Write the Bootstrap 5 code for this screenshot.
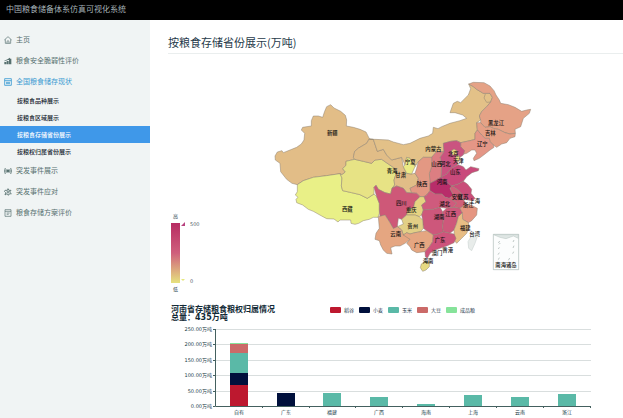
<!DOCTYPE html>
<html lang="zh-CN">
<head>
<meta charset="utf-8">
<meta name="viewport" content="width=device-width, initial-scale=1">
<title>中国粮食储备体系仿真可视化系统</title>
<link href="https://cdn.jsdelivr.net/npm/bootstrap@5.3.0/dist/css/bootstrap.min.css" rel="stylesheet">
<style>
body { font-family: "Noto Sans CJK SC", sans-serif; font-size: 7px; line-height: 1; color: #1f3a4a; background: #fff; }
.topbar { background: #000; height: 20px; padding: 0 6px; }
.topbar h1 { font-size: 8px; line-height: 18px; color: #a4b2b6; font-weight: 400; }
.side { flex: 0 0 150px; background: #f0f4f4; padding-top: 9px; }
.side .nav-link { font-size: 7px; line-height: 21px; padding: 0 4px; color: #56706f; display: flex; align-items: center; gap: 4px; }
.side .nav-link svg { width: 8px; height: 8px; flex: none; }
.side .nav-link.open { color: #3a9ad2; }
.side .sub .nav-link { font-size: 6px; line-height: 17px; padding: 0 17px; color: #10202a; font-weight: 500; }
.side .sub .nav-link.active { background: #3f98e9; color: #fff; }
.view { padding-left: 18px; min-width: 0; }
.view h2 { font-size: 11px; line-height: 15px; padding: 15px 0 3px; border-bottom: 1px solid #eaeeee; font-weight: 400; }
.mapzone { padding: 16px 73px 0 3px; }
.scale { flex: 0 0 89px; }
.scale .cap { width: 9px; font-size: 5px; line-height: 10px; text-align: center; }
.ramp { width: 9px; height: 60px; background: linear-gradient(#b72c62, #cf5f7c 50%, #e6e27e); margin: 2px 0 1px; }
.ends { font: 5px/6px "DejaVu Sans", sans-serif; color: #51606a; }
.ends svg { width: 6px; height: 6px; }
.mapzone > svg { min-width: 0; flex: 1; padding-bottom: 14px; }
.mapzone > svg path { stroke: #8d8070; stroke-width: 1.5; stroke-linejoin: round; }
.mapzone > svg text { font-size: 16px; font-weight: 500; fill: #111; text-anchor: middle; }
.charthead { padding: 12px 0 0 3px; }
.charthead h3 { flex: 0 0 159px; font: 700 8px/8px "DejaVu Sans", "Noto Sans CJK SC", sans-serif; color: #122a36; }
.keys { font-size: 5px; line-height: 8px; gap: 5px; }
.keys li { display: flex; align-items: center; gap: 3px; }
.keys i { width: 11px; height: 6px; border-radius: 1px; }
.c-rice { background: #bd182f; fill: #bd182f; } .c-wheat { background: #00103c; fill: #00103c; }
.c-corn { background: #5ab9a7; fill: #5ab9a7; } .c-soy { background: #cb6a68; fill: #cb6a68; }
.c-done { background: #86e39a; fill: #86e39a; }
.plot { display: block; width: 100%; }
.plot text { font: 5px "DejaVu Sans", "Noto Sans CJK SC", sans-serif; fill: #203c48; }
</style>
<script src="https://cdn.jsdelivr.net/npm/bootstrap@5.3.0/dist/js/bootstrap.bundle.min.js"></script>
</head>
<body class="d-flex flex-column min-vh-100">
<header class="topbar"><h1 class="m-0">中国粮食储备体系仿真可视化系统</h1></header>
<div class="d-flex flex-grow-1">
<nav class="side nav flex-column" aria-label="主菜单">
  <a class="nav-link" href="#"><svg viewBox="0 0 24 24" fill="none" stroke="currentColor" stroke-width="2"><path d="M1 12 12 2l11 10M4 10v12h16V10M9 22v-6q3-4 6 0v6"/></svg>主页</a>
  <a class="nav-link" href="#"><svg viewBox="0 0 24 24" fill="currentColor"><path d="M1 15h6v7H1zM8 12h6v10H8zM15 5h7v17h-7zM1 11 12 6l5-4 2 2-7 5L1 13z"/></svg>粮食安全脆弱性评价</a>
  <a class="nav-link open" href="#"><svg viewBox="0 0 24 24" fill="none" stroke="currentColor" stroke-width="2.5"><path d="M2 2h20v20H2zM2 8h20M6 13h12M6 17h12"/></svg>全国粮食储存现状</a>
  <div class="sub nav flex-column">
    <a class="nav-link" href="#">按粮食品种展示</a>
    <a class="nav-link" href="#">按粮食区域展示</a>
    <a class="nav-link active" aria-current="page" href="#">按粮食存储省份展示</a>
    <a class="nav-link" href="#">按粮权归属省份展示</a>
  </div>
  <a class="nav-link" href="#"><svg viewBox="0 0 24 24" fill="none" stroke="currentColor" stroke-width="2.5"><path d="M4 3q-5 9 0 18M20 3q5 9 0 18M7 7q-3 5 0 10M17 7q3 5 0 10"/><circle cx="12" cy="12" r="3.5" fill="currentColor"/></svg>突发事件展示</a>
  <a class="nav-link" href="#"><svg viewBox="0 0 24 24" fill="none" stroke="currentColor" stroke-width="2.5"><path d="M3 7h7l2-5 3 5h6l-4 5 5 5-7 1-2 4-4-5-6 4 2-7-4-4z"/><circle cx="12" cy="12" r="3"/></svg>突发事件应对</a>
  <a class="nav-link" href="#"><svg viewBox="0 0 24 24" fill="none" stroke="currentColor" stroke-width="2"><path d="M3 2h18v20H3zM3 7h18M8 12h9M8 16h6"/></svg>粮食存储方案评价</a>
</nav>
<main class="view flex-grow-1">
  <h2 class="m-0">按粮食存储省份展示(万吨)</h2>
  <section class="mapzone d-flex">
    <div class="scale align-self-end">
      <div class="cap">高</div>
      <div class="d-flex">
        <div class="ramp"></div>
        <div class="ends d-flex flex-column justify-content-between">
          <span class="d-flex gap-1"><svg viewBox="0 0 6 6"><path d="M1 5 5 1v4z" fill="#b8437f"/></svg>500</span>
          <span class="d-flex gap-1"><svg viewBox="0 0 6 6"><path d="M1 1h4L3 3l2 2z" fill="#e6e77e"/></svg>0</span>
        </div>
      </div>
      <div class="cap">低</div>
    </div>
    <svg viewBox="0 0 870 630" role="img" aria-label="各省粮食存储量地图">
      <path fill="#e2bd87" d="M212 104 222 114 242 124 256 136 260 150 259 168 280 172 300 178 318 186 328 206 320 220 296 234 284 244 280 262 284 268 258 274 258 286 248 296 256 306 246 314 240 311 200 317 160 322 130 332 112 344 96 340 80 328 62 305 60 280 46 270 45 258 52 246 66 242 70 248 90 240 110 232 124 222 132 210 134 190 124 180 128 172 154 168 154 152 160 138 175 138 188 142 194 124 200 110Z"/>
      <path fill="#e9f087" d="M112 344 130 332 160 322 200 317 240 311 246 324 244 348 248 362 275 368 300 374 322 385 342 372 350 380 358 400 358 430 354 442 340 442 328 448 310 452 296 460 285 463 273 460 272 450 240 450 234 456 222 447 200 446 185 438 160 424 145 418 128 405 110 398 108 388 114 382 106 375 112 365Z"/>
      <path fill="#e7e385" d="M246 314 256 306 248 296 258 286 258 274 284 268 310 274 335 280 345 270 365 268 385 282 400 292 410 306 402 330 404 345 396 355 392 372 375 368 355 358 348 346 342 352 342 372 322 385 300 374 275 368 248 362 244 348 246 324 240 311Z"/>
      <path fill="#e1bd87" d="M328 206 340 208 352 244 370 238 380 255 395 270 425 262 430 290 440 310 455 312 465 310 475 325 470 345 450 355 455 368 440 368 430 355 410 348 396 355 404 345 402 330 410 306 400 292 385 282 365 268 345 270 335 280 310 274 284 268 280 262 284 244 296 234 320 220Z"/>
      <path fill="#e3c188" d="M328 208 345 208 385 210 400 216 430 224 450 220 480 205 505 198 518 190 520 172 534 176 545 170 570 160 600 152 620 145 608 135 585 128 570 128 580 100 592 94 602 98 625 75 632 56 626 42 640 50 650 58 670 70 690 70 697 82 692 96 680 110 665 125 658 138 662 150 650 158 652 180 645 190 645 208 630 212 602 218 590 212 572 214 550 220 552 245 530 245 515 262 490 262 475 275 465 290 450 265 440 262 435 285 425 262 395 270 380 255 370 238 352 244 340 208Z"/>
      <path fill="#e5a286" d="M626 42 640 37 672 38 690 48 702 62 708 75 718 90 722 100 745 104 765 112 785 124 800 120 812 118 808 130 790 145 782 170 765 178 766 190 750 192 735 188 715 178 700 175 690 170 675 172 662 158 662 150 658 138 665 125 680 110 692 96 697 82 690 70 670 70 650 58 640 50Z"/>
      <path fill="none" d="M676 72 672 84 680 97 692 96"/>
      <path fill="#e5a086" d="M650 158 662 158 675 172 690 170 700 175 715 178 735 188 750 192 766 190 765 200 750 205 740 218 725 222 710 232 700 225 690 215 688 205 675 205 665 195 652 180Z"/>
      <path fill="#e49686" d="M645 190 652 180 665 195 675 205 688 205 690 215 700 225 702 232 690 240 675 252 658 265 642 272 640 265 650 250 645 240 635 240 620 250 612 252 602 230 602 218 630 212 645 208Z"/>
      <path fill="#ca5380" d="M550 220 572 214 590 212 602 218 602 230 614 242 610 255 600 262 594 270 592 285 575 294 560 312 543 322 545 280 540 262 552 245Z"/>
      <path fill="#e8d982" d="M573 243 582 237 592 243 589 254 578 255ZM588 258 597 256 599 266 594 276 587 270Z"/>
      <path fill="#dc7e82" d="M515 262 530 245 552 245 540 262 545 280 543 322 525 332 510 340 508 310 515 290Z"/>
      <path fill="#e39883" d="M475 275 490 262 515 262 515 290 508 310 510 340 510 362 500 375 492 380 480 380 470 370 455 368 450 355 470 345 475 325 465 310 470 295Z"/>
      <path fill="#eaea84" d="M440 262 450 265 465 290 455 312 440 310 430 290 435 285Z"/>
      <path fill="#c94a7b" d="M560 312 575 294 595 284 610 290 618 300 632 290 657 296 655 302 636 308 620 320 610 334 595 342 575 348 558 335 543 322Z"/>
      <path fill="#b82d6a" d="M510 340 525 332 543 322 558 335 575 348 570 356 580 375 568 385 555 382 545 372 525 372 510 362Z"/>
      <path fill="#ca4d79" d="M575 348 595 342 610 334 622 342 635 358 633 370 645 385 638 392 610 388 605 372 595 360Z"/>
      <path fill="#cf6079" d="M575 348 595 360 605 372 610 388 618 402 600 415 580 412 590 400 580 392 568 385 580 375 570 356Z"/>
      <path fill="#ce5878" d="M342 352 348 346 355 358 375 368 392 372 396 355 410 348 430 355 440 368 470 370 480 380 465 395 460 415 445 415 440 435 425 448 415 445 412 470 400 476 388 455 375 435 360 440 358 420 358 400 350 380Z"/>
      <path fill="#e5d381" d="M480 380 492 380 498 395 485 405 490 420 485 435 478 440 465 435 440 435 445 415 460 415 465 395Z"/>
      <path fill="#cf5b7d" d="M500 375 510 362 525 372 545 372 555 382 568 385 580 392 590 400 580 412 560 415 540 412 520 418 490 420 485 405 498 395 492 380Z"/>
      <path fill="#cd577b" d="M490 420 520 418 540 412 548 425 550 450 548 470 550 485 535 492 520 495 512 490 500 482 490 475 488 450 485 435Z"/>
      <path fill="#ce587b" d="M548 425 560 415 580 412 600 415 607 428 595 440 590 460 582 480 570 490 550 485 548 470 550 450Z"/>
      <path fill="#e59681" d="M600 415 618 402 635 406 652 415 650 435 635 452 625 458 608 448 607 428Z"/>
      <path fill="#e8bd84" d="M607 428 608 448 625 458 628 470 620 490 605 505 590 520 584 512 582 480 590 460 595 440Z"/>
      <path fill="#e2cf86" d="M425 448 440 435 465 435 478 440 488 450 490 475 482 485 465 488 450 492 440 488 430 495 425 480 412 470 430 462Z"/>
      <path fill="#e5a681" d="M355 440 375 435 388 455 400 476 412 470 425 480 430 495 440 495 450 508 435 520 420 528 405 528 392 533 396 552 380 550 370 540 362 525 358 512 345 508 348 490 358 475Z"/>
      <path fill="#e5a681" d="M430 495 440 488 450 492 465 488 482 485 500 482 512 490 520 495 518 515 508 530 495 545 470 548 455 540 450 530 440 520 450 508Z"/>
      <path fill="#ce547b" d="M520 495 535 492 550 485 570 490 582 492 588 505 582 518 560 528 540 535 525 540 510 550 502 565 496 560 495 545 508 530 518 515Z"/>
      <path fill="#e6d981" d="M484 582 495 574 508 577 508 590 498 600 488 604 481 593Z"/>
      <path fill="#e8ecea" d="M650 488 652 500 645 520 635 542 626 535 624 515 634 498Z" style="stroke:#c3ccca"/>
      <path fill="#fcfdfd" d="M700 493H776V599H700Z" style="stroke:#8fa39f"/>
      <path fill="#dfe6e4" d="M701 494H775V505L760 498 738 506 720 502Z" style="stroke:#b5c2bf"/>
      <path fill="none" style="stroke:#81908d" d="m714 518 6-4m-3 9 4-4m-6 18 3-5m-4 22 4-6m41-32 3 -6m-3 24 3-7m-4 24 3-6m-16 26 4-7m-34 5 3-6"/>
      <text x="217" y="196">新疆</text><text x="262" y="423">西藏</text><text x="396" y="309">青海</text><text x="422" y="322">甘肃</text><text x="708" y="164">黑龙江</text><text x="691" y="194">吉林</text><text x="667" y="227">辽宁</text><text x="520" y="244">内蒙古</text><text x="580" y="259">北京</text><text x="595" y="278">天津</text><text x="451" y="282">宁夏</text><text x="530" y="289">山西</text><text x="556" y="289">河北</text><text x="586" y="311">山东</text><text x="486" y="349">陕西</text><text x="546" y="341">河南</text><text x="424" y="406">四川</text><text x="454" y="426">重庆</text><text x="554" y="408">湖北</text><text x="591" y="388">安徽</text><text x="610" y="386">江苏</text><text x="644" y="398">上海</text><text x="625" y="412">浙江</text><text x="537" y="446">湖南</text><text x="572" y="437">江西</text><text x="458" y="473">贵州</text><text x="616" y="481">福建</text><text x="644" y="497">台湾</text><text x="407" y="498">云南</text><text x="478" y="532">广西</text><text x="540" y="517">广东</text><text x="531" y="554">澳门</text><text x="563" y="547">香港</text><text x="504" y="578">海南</text><text x="738" y="590">南海诸岛</text>
    </svg>
  </section>
  <section>
    <div class="charthead d-flex align-items-start">
      <h3 class="m-0">河南省存储粮食粮权归属情况<br>总量：435万吨</h3>
      <ul class="keys list-unstyled d-flex m-0">
        <li><i class="c-rice"></i>稻谷</li><li><i class="c-wheat"></i>小麦</li><li><i class="c-corn"></i>玉米</li><li><i class="c-soy"></i>大豆</li><li><i class="c-done"></i>成品粮</li>
      </ul>
    </div>
    <svg class="plot" viewBox="168 322 455 94" role="img" aria-label="粮权归属柱状图">
      <path d="M216 329.500H591M216 344.500H591M216 360.500H591M216 375.500H591M216 391.500H591" stroke="#d9dede" fill="none"/>
      <g text-anchor="end"><text x="212" y="331">250.00万吨</text><text x="212" y="346">200.00万吨</text><text x="212" y="362">150.00万吨</text><text x="212" y="377">100.00万吨</text><text x="212" y="393">50.00万吨</text><text x="212" y="408">0.00万吨</text></g>
      <rect class="c-rice" x="230" y="385" width="18" height="21"/><rect class="c-wheat" x="230" y="373" width="18" height="12"/><rect class="c-corn" x="230" y="353" width="18" height="20"/><rect class="c-soy" x="230" y="344" width="18" height="9"/><rect class="c-done" x="230" y="343" width="18" height="1"/>
      <rect class="c-wheat" x="277" y="393" width="18" height="13"/>
      <g class="c-corn"><rect x="323" y="393" width="18" height="13"/><rect x="370" y="397" width="18" height="9"/><rect x="417" y="404" width="18" height="2"/><rect x="464" y="395" width="18" height="11"/><rect x="511" y="397" width="18" height="9"/><rect x="558" y="394" width="18" height="12"/></g>
      <path d="M215.500 329V406.500H591M213 329.500h2M213 344.500h2M213 360.500h2M213 375.500h2M213 391.500h2M213 406.500h2M262.500 406v2M309.500 406v2M355.500 406v2M402.500 406v2M449.500 406v2M496.500 406v2M543.500 406v2M590.500 406v2" stroke="#44605f" fill="none"/>
      <g text-anchor="middle"><text x="239" y="414">自有</text><text x="286" y="414">广东</text><text x="332" y="414">福建</text><text x="379" y="414">广西</text><text x="426" y="414">海南</text><text x="473" y="414">上海</text><text x="520" y="414">云南</text><text x="567" y="414">浙江</text></g>
    </svg>
  </section>
</main>
</div>
</body>
</html>
